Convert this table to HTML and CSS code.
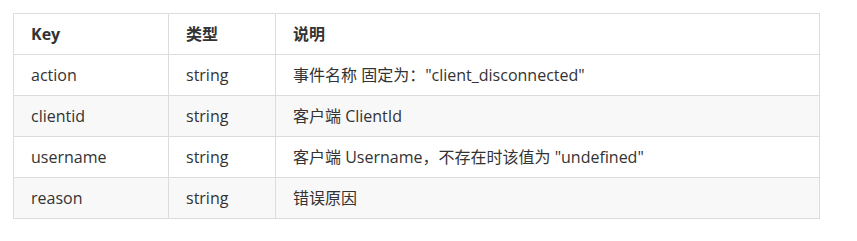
FILE: index.html
```html
<!DOCTYPE html>
<html lang="zh">
<head>
<meta charset="utf-8">
<link rel="stylesheet" href="styles.css">
</head>
<body>
<table class="params">
  <thead>
    <tr><th class="c-key">Key</th><th class="c-type">类型</th><th class="c-desc">说明</th></tr>
  </thead>
  <tbody>
    <tr><td>action</td><td>string</td><td>事件名称 固定为："client_disconnected"</td></tr>
    <tr class="alt"><td>clientid</td><td>string</td><td>客户端 ClientId</td></tr>
    <tr><td>username</td><td>string</td><td>客户端 Username，不存在时该值为 "undefined"</td></tr>
    <tr class="alt"><td>reason</td><td>string</td><td>错误原因</td></tr>
  </tbody>
</table>
</body>
</html>
```
FILE: styles.css
```css
html, body {
  margin: 0;
  padding: 0;
  background: #fff;
}
body {
  padding: 13px 0 0 13px;
  font-family: "Open Sans", "Noto Sans CJK SC", sans-serif;
  font-size: 16px;
  color: #333;
}
.params {
  border-collapse: collapse;
  width: 807px;
  table-layout: fixed;
}
.params th, .params td {
  box-sizing: border-box;
  border: 1px solid #dcdcdc;
  padding: 8px 16px 8px 17px;
  line-height: 24px;
  text-align: left;
  white-space: nowrap;
}
.params th {
  font-weight: 700;
  color: #333;
}
.c-key { width: 155px; }
.c-type { width: 107px; }
.params tr.alt td {
  background: #f8f8f8;
}
```
